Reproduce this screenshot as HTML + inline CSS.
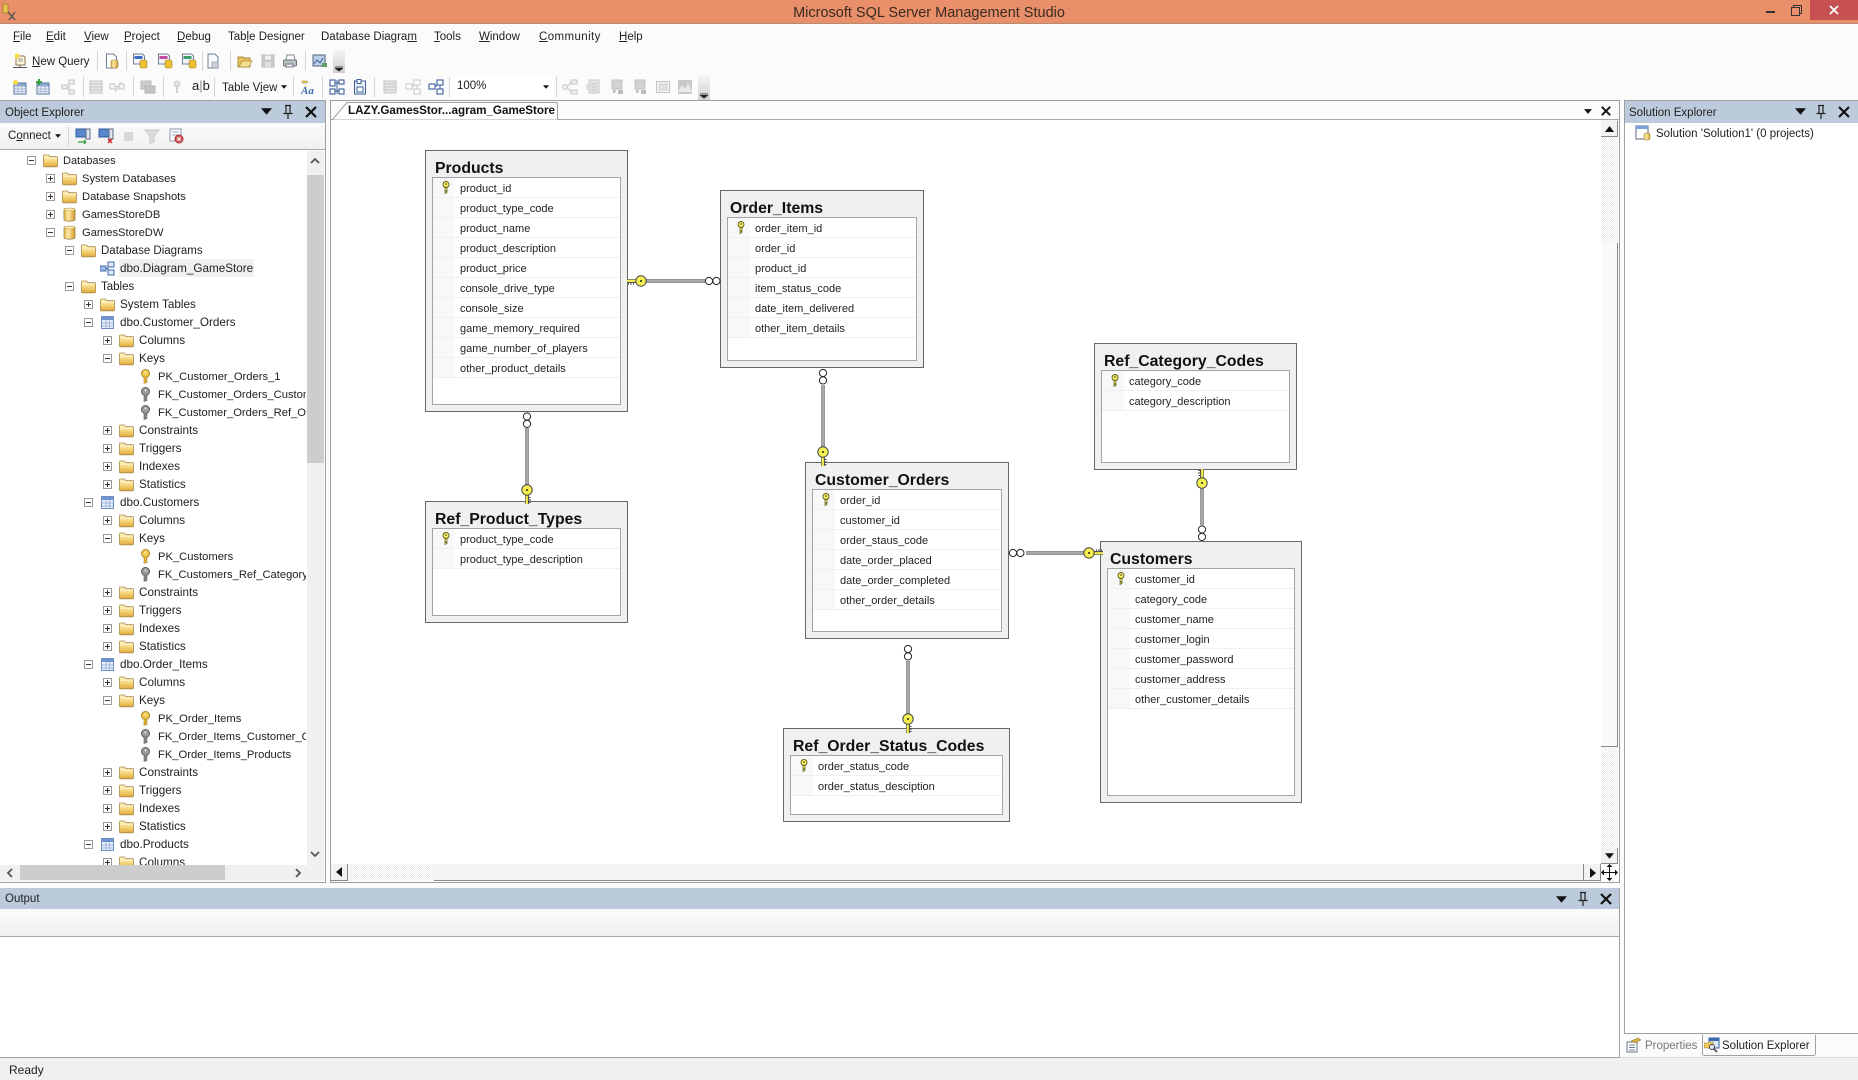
<!DOCTYPE html>
<html lang="en">
<head>
<meta charset="utf-8">
<title>Microsoft SQL Server Management Studio</title>
<style>
html,body{margin:0;padding:0;width:1858px;height:1080px;overflow:hidden;background:#fbfbfb;font-family:"Liberation Sans",sans-serif;font-size:11.5px;color:#222}
.a{position:absolute}
u{text-decoration:underline}
#title{left:0;top:0;width:1858px;height:23px;background:#e9906a;border-bottom:1px solid #b98a72;text-align:center;line-height:26px;font-size:14.5px;color:#3a2a22}
.mi{position:absolute;top:29px;line-height:16px;font-size:11.5px;color:#222;white-space:nowrap}
.sep{position:absolute;width:1px;height:20px;background:#d4d4d4}
.ti{position:absolute;width:16px;height:16px}
.grip{position:absolute;width:12px;background:linear-gradient(#f5f5f5,#cfcfcf)}
.hdr{position:absolute;background:#bccbdb;height:22px;line-height:24px;font-size:11.5px;color:#222;padding-left:5px;box-sizing:border-box}
#tree{position:absolute;left:0;top:151px;width:306px;height:714px;overflow:hidden;background:#fff}
.r{height:18px;line-height:20px;display:flex;align-items:center;white-space:nowrap;font-size:11.5px;color:#222}
.r span{position:relative;top:1px}
.r i{display:block;flex:none;width:9px;height:9px;margin-right:7px;box-sizing:border-box;position:relative}
.r i.p,.r i.m{border:1px solid #9a9a9a;background:#fff}
.r i.p:before,.r i.m:before{content:"";position:absolute;left:1px;top:3px;width:5px;height:1px;background:#333}
.r i.p:after{content:"";position:absolute;left:3px;top:1px;width:1px;height:5px;background:#333}
.r svg{flex:none;width:15px;height:15px;margin-right:5px}
.L0{padding-left:27px;font-size:11px}.L1{padding-left:46px;font-size:11.2px}.L2{padding-left:65px}.L3{padding-left:84px;font-size:11.7px}.L4{padding-left:103px;font-size:11.7px}.L5{padding-left:122px;font-size:11.2px}
.sel{background:linear-gradient(#f0f0f0,#f0f0f0) no-repeat 119px 0/135px 18px}
.t{position:absolute;box-sizing:border-box;background:#f0f0f0;border:1px solid #666}
.t b{position:absolute;left:9px;top:7px;font-size:15.8px;line-height:21px;color:#111;white-space:nowrap}
.t>div{position:absolute;left:6px;right:6px;top:26px;bottom:6px;background:#fff;border:1px solid #a4a4a4;overflow:hidden}
.t p{margin:0;height:20px;box-sizing:border-box;border-bottom:1px solid #f0f0f0;line-height:22px;font-size:11px;color:#222;padding-left:27px;background:linear-gradient(#f8f8f8,#f8f8f8) no-repeat 0 0/22px 100%;position:relative;white-space:nowrap}
.t p svg{position:absolute;left:8px;top:3px;width:10px;height:13px}
.hatch{background:repeating-conic-gradient(#ffffff 0 25%,#ececec 0 50%) 0 0/2px 2px}
.btn{position:absolute;background:#f2f2f2;border-right:1px solid #8a8a8a;border-bottom:1px solid #8a8a8a;box-sizing:border-box}
</style>
</head>
<body>
<svg width="0" height="0" style="position:absolute">
<defs>
<linearGradient id="gf" x1="0" y1="0" x2="0" y2="1"><stop offset="0" stop-color="#fff3c0"/><stop offset=".5" stop-color="#f6d77c"/><stop offset="1" stop-color="#e0a93a"/></linearGradient>
<linearGradient id="gd" x1="0" y1="0" x2="1" y2="0"><stop offset="0" stop-color="#e6b94d"/><stop offset=".4" stop-color="#fbe9a6"/><stop offset="1" stop-color="#d29a2c"/></linearGradient>
<symbol id="folder" viewBox="0 0 15 15"><path d="M.5 3.500V13a.8.8 0 0 0 .8.8h12.400a.8.8 0 0 0 .8-.8V4.500a.8.8 0 0 0-.8-.8H7L5.500 2H1.300a.8.8 0 0 0-.8.8z" fill="url(#gf)" stroke="#a98a4a" stroke-width=".8"/><path d="M1 5.200h13" stroke="#fff6d0" stroke-width="1"/></symbol>
<symbol id="db" viewBox="0 0 15 15"><path d="M2 2.500C2 .8 13 .8 13 2.500v10.300c0 1.800-11 1.800-11 0z" fill="url(#gd)" stroke="#8f7330" stroke-width=".7"/><ellipse cx="7.500" cy="2.500" rx="5.300" ry="1.400" fill="#fff0b5" stroke="#a88a3e" stroke-width=".4"/></symbol>
<symbol id="tbl" viewBox="0 0 15 15"><rect x="1.500" y="1.500" width="12" height="12" fill="#eaf0fa" stroke="#6f8fc4"/><rect x="2" y="2" width="11" height="3" fill="#6f93d0"/><path d="M2 8h11M2 11h11M6 5v8M9.500 5v8" stroke="#9fb5dc"/></symbol>
<symbol id="diag" viewBox="0 0 15 15" preserveAspectRatio="none"><rect x="8" y="1" width="6" height="5" fill="#dfe9f7" stroke="#3f6cae"/><rect x="8" y="9" width="6" height="5" fill="#dfe9f7" stroke="#3f6cae"/><rect x="0" y="5" width="6" height="5" fill="#9fb9de" stroke="#3f6cae"/><path d="M6 7.500h2M8 3.500v8" stroke="#3f6cae" fill="none"/></symbol>
<symbol id="kg" viewBox="0 0 15 15"><circle cx="7.500" cy="4.500" r="4" fill="#f2c94c" stroke="#a9832a"/><circle cx="7.500" cy="3.500" r="1" fill="#fff6c8"/><path d="M6 8v6.500l1.500-.5 1.500-.5v-1.500h-1V11h1V8z" fill="#e6b93a" stroke="#a9832a" stroke-width=".6"/></symbol>
<symbol id="ks" viewBox="0 0 15 15"><circle cx="7.500" cy="4.500" r="4" fill="#9a9a9a" stroke="#5c5c5c"/><circle cx="7.500" cy="3.500" r="1" fill="#e8e8e8"/><path d="M6 8v6.500l1.500-.5 1.500-.5v-1.500h-1V11h1V8z" fill="#8a8a8a" stroke="#5c5c5c" stroke-width=".6"/></symbol>
<symbol id="tk" viewBox="0 0 10 13"><circle cx="5" cy="3.500" r="3" fill="#f8ee60" stroke="#5a5a20" stroke-width=".9"/><circle cx="5" cy="3" r=".8" fill="#333"/><path d="M4 6.500v6l2-1v-1H5v-1h1v-3z" fill="#f8ee60" stroke="#5a5a20" stroke-width=".7"/></symbol>
<symbol id="pin" viewBox="0 0 12 16"><path d="M3 1.500h6M4 1.500v8M8 1.500v8M1.500 9.500h9M6 9.500V15" stroke="#222" stroke-width="1.200" fill="none"/></symbol>
<symbol id="xx" viewBox="0 0 12 12"><path d="M1 1l10 10M11 1L1 11" stroke="#111" stroke-width="2.200"/></symbol>
<symbol id="dn" viewBox="0 0 10 6"><path d="M0 0h10L5 6z" fill="#111"/></symbol>
<symbol id="ddoc" viewBox="0 0 16 16"><path d="M2.500 1h7l3 3v11h-10z" fill="#fff" stroke="#6f7f95"/><rect x="7" y="7" width="7" height="8" rx="2" fill="url(#gd)" stroke="#9a7a28" stroke-width=".6"/></symbol>
<symbol id="dq" viewBox="0 0 16 16"><path d="M1.500 1h9l2 2v8h-11z" fill="#f4f4fa" stroke="#6f7f95"/><rect x="2.500" y="3" width="8" height="3" fill="#3c6cc0"/><rect x="8" y="7" width="7" height="8" rx="2" fill="#f0c030" stroke="#9a7a28" stroke-width=".6"/></symbol>
<symbol id="dq2" viewBox="0 0 16 16"><path d="M1.500 1h9l2 2v8h-11z" fill="#f4f4fa" stroke="#6f7f95"/><rect x="2.500" y="3" width="8" height="3" fill="#c04c9c"/><rect x="8" y="7" width="7" height="8" rx="2" fill="#f0c030" stroke="#9a7a28" stroke-width=".6"/></symbol>
<symbol id="dq3" viewBox="0 0 16 16"><path d="M1.500 1h9l2 2v8h-11z" fill="#f4f4fa" stroke="#6f7f95"/><rect x="2.500" y="3" width="8" height="3" fill="#3c9c6c"/><rect x="8" y="7" width="7" height="8" rx="2" fill="#f0c030" stroke="#9a7a28" stroke-width=".6"/></symbol>
<symbol id="dtx" viewBox="0 0 16 16"><path d="M3 1h7l3 3v11H3z" fill="#f9fafd" stroke="#6f7f95"/><rect x="7" y="9" width="6" height="6" fill="#cdd3dc" stroke="#8a8a9a" stroke-width=".6"/></symbol>
<symbol id="open" viewBox="0 0 16 16"><path d="M1 4h5l1 1h6v9H1z" fill="#eac25c" stroke="#a98a40"/><path d="M2 14l3-6h10l-3 6z" fill="#f7dd8e" stroke="#a98a40" stroke-width=".7"/></symbol>
<symbol id="save" viewBox="0 0 16 16"><rect x="2" y="2" width="12" height="12" fill="#c9c9c9" stroke="#bdbdbd"/><rect x="5" y="2.500" width="6" height="4" fill="#f0f0f0"/><rect x="5" y="9" width="6" height="5" fill="#e0e0e0"/></symbol>
<symbol id="print" viewBox="0 0 16 16"><path d="M5 2h7l1 5H4z" fill="#fff" stroke="#7c8a8a"/><rect x="1.500" y="7" width="13" height="6" rx="1" fill="#b8c2c2" stroke="#667676"/><rect x="4" y="11" width="7" height="3" fill="#eee" stroke="#778"/></symbol>
<symbol id="act" viewBox="0 0 16 16"><rect x="1" y="2" width="12" height="11" fill="#bcd0ea" stroke="#50607a"/><path d="M2 11l3-4 3 3 3-5" stroke="#3a5f8a" fill="none"/><rect x="10" y="10" width="5" height="4" fill="#5f9e5f"/></symbol>
<symbol id="new" viewBox="0 0 16 16"><path d="M4 3h8l1 1v8H4z" fill="#fff8dc" stroke="#8a7a50"/><circle cx="5" cy="3" r="2.500" fill="#f7e04a"/><path d="M1 14.500h14M8 12v2.500" stroke="#555"/><path d="M6 6h5M6 8h5" stroke="#999"/></symbol>
<symbol id="tnew" viewBox="0 0 16 16"><rect x="2" y="4" width="12" height="11" fill="#eef3fb" stroke="#56759f"/><rect x="2.500" y="4.500" width="11" height="3" fill="#8ea9d0"/><path d="M2 10h12M2 12.500h12M6 7v8M10 7v8" stroke="#a6b9d6"/><circle cx="3.500" cy="3.500" r="2.500" fill="#f7d94a"/></symbol>
<symbol id="tadd" viewBox="0 0 16 16"><rect x="2" y="4" width="12" height="11" fill="#eef3fb" stroke="#56759f"/><rect x="2.500" y="4.500" width="11" height="3" fill="#8ea9d0"/><path d="M2 10h12M2 12.500h12M6 7v8M10 7v8" stroke="#a6b9d6"/><path d="M4 0v6M1 3h6" stroke="#3fa03f" stroke-width="2"/></symbol>
<symbol id="gb1" viewBox="0 0 16 16"><g fill="#f0f0f0" stroke="#c2c2c2"><rect x="9" y="1" width="5" height="4"/><rect x="2" y="6" width="5" height="4"/><rect x="9" y="11" width="5" height="4"/></g><path d="M7 8h2M9 3v10" stroke="#c2c2c2" fill="none"/></symbol>
<symbol id="gb2" viewBox="0 0 16 16"><rect x="2" y="2" width="12" height="12" fill="#e6e6e6" stroke="#c6c6c6"/><path d="M2 5h12M2 8h12M2 11h12" stroke="#c6c6c6"/></symbol>
<symbol id="gb3" viewBox="0 0 16 16"><g fill="#f4f4f4" stroke="#c6c6c6"><rect x="1" y="5" width="5" height="5"/><rect x="10" y="5" width="5" height="5"/></g><path d="M6 7.500h4M12 3l-6 10" stroke="#c6c6c6"/></symbol>
<symbol id="gb4" viewBox="0 0 16 16"><rect x="1" y="2" width="10" height="8" fill="#ccc" stroke="#bbb"/><rect x="5" y="7" width="10" height="7" fill="#c4c4c4" stroke="#b4b4b4"/></symbol>
<symbol id="klt" viewBox="0 0 16 16"><circle cx="8" cy="5" r="3" fill="#e2e2e2" stroke="#cfcfcf"/><path d="M8 8v6" stroke="#cfcfcf" stroke-width="2"/></symbol>
<symbol id="aa" viewBox="0 0 16 16"><path d="M2 2h5l1 2h-6z" fill="#e9c45e" stroke="#a98a40" stroke-width=".5"/><path d="M3 6l5 2-2 0z" fill="#e9c45e"/><text x="1" y="15" font-family="Liberation Serif,serif" font-style="italic" font-weight="bold" font-size="11" fill="#3a69b0">Aa</text></symbol>
<symbol id="lay" viewBox="0 0 16 16"><g fill="#fff" stroke="#3a5f9a" stroke-width="1.100"><rect x="1" y="1" width="5" height="6"/><rect x="10" y="1" width="5" height="4"/><rect x="1" y="10" width="5" height="5"/><rect x="10" y="10" width="5" height="5"/></g><path d="M6 4h4M8 1v14M6 12h4" stroke="#3a5f9a" fill="none"/></symbol>
<symbol id="tsave" viewBox="0 0 16 16"><rect x="2.500" y="2" width="11" height="13" fill="#eef3fb" stroke="#3a5f9a"/><rect x="5" y="0.500" width="4" height="4" fill="#fff" stroke="#3a5f9a"/><rect x="5" y="8" width="6" height="5" fill="#fff" stroke="#3a5f9a"/></symbol>
<symbol id="lay2" viewBox="0 0 16 16"><g fill="#fff" stroke="#c6c6c6"><rect x="9" y="1" width="6" height="5"/><rect x="1" y="5" width="6" height="5"/><rect x="9" y="10" width="6" height="5"/></g><path d="M7 7h2M12 6v4" stroke="#c6c6c6"/></symbol>
<symbol id="lay3" viewBox="0 0 16 16"><g fill="#fff" stroke="#3a5f9a" stroke-width="1.100"><rect x="9" y="1" width="6" height="5"/><rect x="1" y="5" width="6" height="5"/><rect x="9" y="10" width="6" height="5"/></g><path d="M7 7h2M12 6v4" stroke="#3a5f9a"/></symbol>
<symbol id="gsh" viewBox="0 0 16 16"><g fill="#eee" stroke="#c6c6c6"><circle cx="3" cy="8" r="2.500"/><rect x="9" y="1" width="6" height="4"/><rect x="9" y="11" width="6" height="4"/></g><path d="M5 8l4-5M5 8l4 5" stroke="#c6c6c6"/></symbol>
<symbol id="gdoc" viewBox="0 0 16 16"><rect x="4" y="1" width="10" height="13" fill="#e4e4e4" stroke="#cacaca"/><path d="M1 6l3-2v8l-3-2z" fill="#ddd"/><path d="M6 5h6M6 8h6M6 11h6" stroke="#c4c4c4"/></symbol>
<symbol id="gab" viewBox="0 0 16 16"><rect x="3" y="1" width="10" height="9" fill="#d2d2d2" stroke="#c0c0c0"/><path d="M4 11h3l-1 3h-2zM9 11h5v4H9z" fill="#bcbcbc"/></symbol>
<symbol id="gsq" viewBox="0 0 16 16"><rect x="1.500" y="2.500" width="13" height="11" fill="#f4f4f4" stroke="#c4c4c4"/><rect x="4" y="5" width="8" height="6" fill="#e2e2e2" stroke="#cfcfcf"/></symbol>
<symbol id="gim" viewBox="0 0 16 16"><rect x="1" y="1" width="14" height="14" fill="#c9c9c9"/><path d="M1 13l4-7 3 4 3-6 4 9z" fill="#e9e9e9"/></symbol>
<symbol id="conn1" viewBox="0 0 16 16"><rect x="1" y="1" width="10" height="8" fill="#5a88cc" stroke="#2f5a9a"/><rect x="11" y="1" width="4" height="10" fill="#dfe6f0" stroke="#5a6a80"/><path d="M3 14h8M11 14l-2-2M11 14l-2 2" stroke="#2e9a3a" stroke-width="1.200" fill="none"/></symbol>
<symbol id="conn2" viewBox="0 0 16 16"><rect x="1" y="1" width="10" height="8" fill="#5a88cc" stroke="#2f5a9a"/><rect x="11" y="1" width="4" height="10" fill="#dfe6f0" stroke="#5a6a80"/><path d="M10 11l4 4M14 11l-4 4" stroke="#d22" stroke-width="1.400"/></symbol>
<symbol id="scr" viewBox="0 0 16 16"><rect x="2" y="1" width="11" height="12" fill="#fff" stroke="#8a9ab0"/><path d="M4 4h7M4 7h7" stroke="#9ab"/><circle cx="11" cy="11" r="4" fill="#d86060" stroke="#a03030"/><path d="M9.500 9.500l3 3M12.500 9.500l-3 3" stroke="#fff"/></symbol>
<symbol id="fil" viewBox="0 0 16 16"><path d="M1 2h14L10 8v6l-4 1V8z" fill="#dcdcdc" stroke="#c8c8c8"/></symbol>
<symbol id="sol" viewBox="0 0 16 16"><rect x="1" y="1" width="12" height="13" fill="#fff" stroke="#5a6a80"/><rect x="1" y="1" width="12" height="3" fill="#7ba2d8"/><rect x="9" y="8" width="6" height="7" rx="2" fill="url(#gd)" stroke="#9a7a28" stroke-width=".5"/></symbol>
<symbol id="prop" viewBox="0 0 16 16"><rect x="1" y="5" width="10" height="10" fill="#fff" stroke="#6a7a90"/><path d="M3 8h6M3 10.500h6M3 13h6" stroke="#6a7a90"/><path d="M5 4l7-3 3 2-6 3z" fill="#d8b04a" stroke="#8a7030" stroke-width=".5"/></symbol>
<symbol id="solx" viewBox="0 0 16 16"><rect x="5" y="1" width="10" height="10" fill="#dde8f8" stroke="#3a5f9a"/><rect x="5" y="1" width="10" height="3" fill="#3a6ab0"/><path d="M0 6h4l1-1h4v6H0z" fill="#ecc860" stroke="#97803a" stroke-width=".6"/><circle cx="8" cy="10" r="2.500" fill="#eef" stroke="#444"/><path d="M10 12l3 3" stroke="#333" stroke-width="1.500"/></symbol>
<g id="dk"><path d="M-14 0h9" stroke="#444" stroke-width="3.800"/><path d="M-14 -.2h9" stroke="#f4f050" stroke-width="2.200"/><path d="M-12.500 2v1.500M-10 2v2M-7.500 2v1.500" stroke="#444"/><circle r="5.200" fill="#f4f050" stroke="#444" stroke-width="1"/><circle r="1" fill="#222"/></g>
<g id="dh"><circle cx="0" r="3.600" fill="#fff" stroke="#222"/><circle cx="7.400" r="3.600" fill="#fff" stroke="#222"/></g>
</defs>
</svg>

<div id="title" class="a">Microsoft SQL Server Management Studio</div>
<svg class="a" style="left:2px;top:3px" width="18" height="18" viewBox="0 0 18 18"><rect x="1" y="1" width="5" height="9" fill="#e8c04a" stroke="#8a7030" stroke-width=".6"/><path d="M6 9l7 8M13 9l-6 8" stroke="#555" stroke-width="1.400"/></svg>
<svg class="a" style="left:1765px;top:10px" width="14" height="4"><rect x="1" y="1" width="9" height="2" fill="#333"/></svg>
<svg class="a" style="left:1790px;top:4px" width="14" height="14"><rect x="1.500" y="3.500" width="8" height="8" fill="none" stroke="#333"/><path d="M3.500 3.500v-2h8v8h-2" fill="none" stroke="#333"/></svg>
<div class="a" style="left:1810px;top:0;width:48px;height:20px;background:#c75050"></div>
<svg class="a" style="left:1828px;top:4px" width="12" height="12"><path d="M2 2l8 8M10 2l-8 8" stroke="#fff" stroke-width="1.800"/></svg>

<span class="mi" style="left:13px"><u>F</u>ile</span>
<span class="mi" style="left:46px"><u>E</u>dit</span>
<span class="mi" style="left:84px"><u>V</u>iew</span>
<span class="mi" style="left:124px"><u>P</u>roject</span>
<span class="mi" style="left:177px"><u>D</u>ebug</span>
<span class="mi" style="left:228px">Tab<u>l</u>e Designer</span>
<span class="mi" style="left:321px">Database Diagra<u>m</u></span>
<span class="mi" style="left:434px"><u>T</u>ools</span>
<span class="mi" style="left:479px"><u>W</u>indow</span>
<span class="mi" style="left:539px;letter-spacing:.4px"><u>C</u>ommunity</span>
<span class="mi" style="left:619px"><u>H</u>elp</span>

<!-- toolbar 1 -->
<svg class="ti" style="left:12px;top:53px"><use href="#new"/></svg>
<span class="mi" style="left:32px;top:54px"><u>N</u>ew Query</span>
<div class="sep" style="left:97px;top:51px"></div>
<svg class="ti" style="left:104px;top:53px"><use href="#ddoc"/></svg>
<div class="sep" style="left:126px;top:51px"></div>
<svg class="ti" style="left:132px;top:53px"><use href="#dq"/></svg>
<svg class="ti" style="left:157px;top:53px"><use href="#dq2"/></svg>
<svg class="ti" style="left:181px;top:53px"><use href="#dq3"/></svg>
<div class="sep" style="left:202px;top:51px"></div>
<svg class="ti" style="left:205px;top:53px"><use href="#dtx"/></svg>
<div class="sep" style="left:230px;top:51px"></div>
<svg class="ti" style="left:237px;top:53px"><use href="#open"/></svg>
<svg class="ti" style="left:260px;top:53px"><use href="#save"/></svg>
<svg class="ti" style="left:282px;top:53px"><use href="#print"/></svg>
<div class="sep" style="left:305px;top:51px"></div>
<svg class="ti" style="left:312px;top:53px"><use href="#act"/></svg>
<div class="grip" style="left:333px;top:50px;height:23px"></div>
<svg class="a" style="left:335px;top:66px" width="8" height="6"><path d="M0 0h8M0 2h8l-4 3z" stroke="#222" stroke-width=".8" fill="#222"/></svg>

<!-- toolbar 2 -->
<svg class="ti" style="left:12px;top:79px"><use href="#tnew"/></svg>
<svg class="ti" style="left:35px;top:79px"><use href="#tadd"/></svg>
<svg class="ti" style="left:60px;top:79px"><use href="#gb1"/></svg>
<div class="sep" style="left:83px;top:77px"></div>
<svg class="ti" style="left:88px;top:79px"><use href="#gb2"/></svg>
<svg class="ti" style="left:109px;top:79px"><use href="#gb3"/></svg>
<div class="sep" style="left:133px;top:77px"></div>
<svg class="ti" style="left:140px;top:79px"><use href="#gb4"/></svg>
<div class="sep" style="left:163px;top:77px"></div>
<svg class="ti" style="left:169px;top:79px"><use href="#klt"/></svg>
<span class="mi" style="left:192px;top:78px;font-size:13px">a<span style="color:#888">|</span>b</span>
<div class="sep" style="left:214px;top:77px"></div>
<span class="mi" style="left:222px;top:80px">Table V<u>i</u>ew</span>
<svg class="a" style="left:281px;top:85px" width="6" height="4"><use href="#dn"/></svg>
<div class="sep" style="left:293px;top:77px"></div>
<svg class="ti" style="left:300px;top:79px"><use href="#aa"/></svg>
<div class="sep" style="left:322px;top:77px"></div>
<svg class="ti" style="left:329px;top:79px"><use href="#lay"/></svg>
<svg class="ti" style="left:352px;top:79px"><use href="#tsave"/></svg>
<div class="sep" style="left:374px;top:77px"></div>
<svg class="ti" style="left:382px;top:79px"><use href="#gb2"/></svg>
<svg class="ti" style="left:405px;top:79px"><use href="#lay2"/></svg>
<svg class="ti" style="left:428px;top:79px"><use href="#lay3"/></svg>
<div class="sep" style="left:449px;top:77px"></div>
<div class="a" style="left:450px;top:76px;width:104px;height:22px;background:#fff"></div>
<span class="mi" style="left:457px;top:78px">100%</span>
<svg class="a" style="left:543px;top:85px" width="6" height="4"><use href="#dn"/></svg>
<div class="sep" style="left:556px;top:77px"></div>
<svg class="ti" style="left:562px;top:79px"><use href="#gsh"/></svg>
<svg class="ti" style="left:585px;top:79px"><use href="#gdoc"/></svg>
<svg class="ti" style="left:609px;top:79px"><use href="#gab"/></svg>
<svg class="ti" style="left:632px;top:79px"><use href="#gab"/></svg>
<svg class="ti" style="left:655px;top:79px"><use href="#gsq"/></svg>
<svg class="ti" style="left:677px;top:79px"><use href="#gim"/></svg>
<div class="grip" style="left:698px;top:76px;height:24px"></div>
<svg class="a" style="left:700px;top:93px" width="8" height="6"><path d="M0 0h8M0 2h8l-4 3z" stroke="#222" stroke-width=".8" fill="#222"/></svg>

<!-- object explorer -->
<div class="a" style="left:0;top:100px;width:326px;height:783px;box-sizing:border-box;border:1px solid #9f9f9f;border-left:0;background:#fff"></div>
<div class="hdr" style="left:0;top:101px;width:325px">Object Explorer</div>
<svg class="a" style="left:261px;top:108px" width="11" height="7"><use href="#dn"/></svg>
<svg class="a" style="left:282px;top:104px" width="12" height="16"><use href="#pin"/></svg>
<svg class="a" style="left:305px;top:106px" width="12" height="12"><use href="#xx"/></svg>
<div class="a" style="left:0;top:123px;width:325px;height:26px;background:linear-gradient(#fbfbfb,#f0f0f0);border-bottom:1px solid #a8a8a8"></div>
<span class="mi" style="left:8px;top:128px">C<u>o</u>nnect</span>
<svg class="a" style="left:55px;top:134px" width="6" height="4"><use href="#dn"/></svg>
<div class="sep" style="left:68px;top:127px"></div>
<svg class="ti" style="left:75px;top:128px"><use href="#conn1"/></svg>
<svg class="ti" style="left:98px;top:128px"><use href="#conn2"/></svg>
<div class="a" style="left:124px;top:132px;width:9px;height:9px;background:#d8d8d8"></div>
<svg class="ti" style="left:144px;top:128px"><use href="#fil"/></svg>
<svg class="ti" style="left:168px;top:128px"><use href="#scr"/></svg>

<div id="tree">
<div class="r L0"><i class="m"></i><svg><use href="#folder"/></svg><span>Databases</span></div>
<div class="r L1"><i class="p"></i><svg><use href="#folder"/></svg><span>System Databases</span></div>
<div class="r L1"><i class="p"></i><svg><use href="#folder"/></svg><span>Database Snapshots</span></div>
<div class="r L1"><i class="p"></i><svg><use href="#db"/></svg><span>GamesStoreDB</span></div>
<div class="r L1"><i class="m"></i><svg><use href="#db"/></svg><span>GamesStoreDW</span></div>
<div class="r L2"><i class="m"></i><svg><use href="#folder"/></svg><span>Database Diagrams</span></div>
<div class="r L3 sel"><i></i><svg><use href="#diag"/></svg><span>dbo.Diagram_GameStore</span></div>
<div class="r L2"><i class="m"></i><svg><use href="#folder"/></svg><span>Tables</span></div>
<div class="r L3"><i class="p"></i><svg><use href="#folder"/></svg><span>System Tables</span></div>
<div class="r L3"><i class="m"></i><svg><use href="#tbl"/></svg><span>dbo.Customer_Orders</span></div>
<div class="r L4"><i class="p"></i><svg><use href="#folder"/></svg><span>Columns</span></div>
<div class="r L4"><i class="m"></i><svg><use href="#folder"/></svg><span>Keys</span></div>
<div class="r L5"><i></i><svg><use href="#kg"/></svg><span>PK_Customer_Orders_1</span></div>
<div class="r L5"><i></i><svg><use href="#ks"/></svg><span>FK_Customer_Orders_Customers</span></div>
<div class="r L5"><i></i><svg><use href="#ks"/></svg><span>FK_Customer_Orders_Ref_Order_Status_Codes</span></div>
<div class="r L4"><i class="p"></i><svg><use href="#folder"/></svg><span>Constraints</span></div>
<div class="r L4"><i class="p"></i><svg><use href="#folder"/></svg><span>Triggers</span></div>
<div class="r L4"><i class="p"></i><svg><use href="#folder"/></svg><span>Indexes</span></div>
<div class="r L4"><i class="p"></i><svg><use href="#folder"/></svg><span>Statistics</span></div>
<div class="r L3"><i class="m"></i><svg><use href="#tbl"/></svg><span>dbo.Customers</span></div>
<div class="r L4"><i class="p"></i><svg><use href="#folder"/></svg><span>Columns</span></div>
<div class="r L4"><i class="m"></i><svg><use href="#folder"/></svg><span>Keys</span></div>
<div class="r L5"><i></i><svg><use href="#kg"/></svg><span>PK_Customers</span></div>
<div class="r L5"><i></i><svg><use href="#ks"/></svg><span>FK_Customers_Ref_Category_Codes</span></div>
<div class="r L4"><i class="p"></i><svg><use href="#folder"/></svg><span>Constraints</span></div>
<div class="r L4"><i class="p"></i><svg><use href="#folder"/></svg><span>Triggers</span></div>
<div class="r L4"><i class="p"></i><svg><use href="#folder"/></svg><span>Indexes</span></div>
<div class="r L4"><i class="p"></i><svg><use href="#folder"/></svg><span>Statistics</span></div>
<div class="r L3"><i class="m"></i><svg><use href="#tbl"/></svg><span>dbo.Order_Items</span></div>
<div class="r L4"><i class="p"></i><svg><use href="#folder"/></svg><span>Columns</span></div>
<div class="r L4"><i class="m"></i><svg><use href="#folder"/></svg><span>Keys</span></div>
<div class="r L5"><i></i><svg><use href="#kg"/></svg><span>PK_Order_Items</span></div>
<div class="r L5"><i></i><svg><use href="#ks"/></svg><span>FK_Order_Items_Customer_Orders</span></div>
<div class="r L5"><i></i><svg><use href="#ks"/></svg><span>FK_Order_Items_Products</span></div>
<div class="r L4"><i class="p"></i><svg><use href="#folder"/></svg><span>Constraints</span></div>
<div class="r L4"><i class="p"></i><svg><use href="#folder"/></svg><span>Triggers</span></div>
<div class="r L4"><i class="p"></i><svg><use href="#folder"/></svg><span>Indexes</span></div>
<div class="r L4"><i class="p"></i><svg><use href="#folder"/></svg><span>Statistics</span></div>
<div class="r L3"><i class="m"></i><svg><use href="#tbl"/></svg><span>dbo.Products</span></div>
<div class="r L4"><i class="p"></i><svg><use href="#folder"/></svg><span>Columns</span></div>
</div>
<!-- OE scrollbars -->
<div class="a" style="left:307px;top:151px;width:17px;height:730px;background:#f0f0f0"></div>
<div class="a" style="left:307px;top:175px;width:17px;height:288px;background:#cdcdcd"></div>
<svg class="a" style="left:310px;top:157px" width="10" height="7"><path d="M1 6l4-4 4 4" fill="none" stroke="#555" stroke-width="1.800"/></svg>
<svg class="a" style="left:310px;top:851px" width="10" height="7"><path d="M1 1l4 4 4-4" fill="none" stroke="#555" stroke-width="1.800"/></svg>
<div class="a" style="left:0;top:865px;width:307px;height:16px;background:#f0f0f0"></div>
<div class="a" style="left:20px;top:865px;width:205px;height:15px;background:#cdcdcd"></div>
<svg class="a" style="left:6px;top:868px" width="8" height="10"><path d="M6 1L2 5l4 4" fill="none" stroke="#555" stroke-width="1.800"/></svg>
<svg class="a" style="left:294px;top:868px" width="8" height="10"><path d="M2 1l4 4-4 4" fill="none" stroke="#555" stroke-width="1.800"/></svg>

<!-- document -->
<div class="a" style="left:330px;top:100px;width:1290px;height:783px;box-sizing:border-box;border:1px solid #9f9f9f;border-bottom:1px solid #9f9f9f;background:#fff"></div>
<div class="a" style="left:331px;top:119px;width:1288px;height:1px;background:#a8a8a8"></div>
<div class="a" style="left:331px;top:101px;width:1288px;height:18px;background:#fbfbfb"></div>
<svg class="a" style="left:332px;top:102px" width="226" height="18"><path d="M.5 17.500L15 .5h209a1.500 1.500 0 0 1 1.500 1.500v15.500" fill="#fff" stroke="#a0a0a0"/></svg>
<span class="a" style="left:348px;top:103px;line-height:16px;font-weight:bold;font-size:11.65px;color:#111;white-space:nowrap">LAZY.GamesStor...agram_GameStore</span>
<svg class="a" style="left:1584px;top:109px" width="8" height="5"><use href="#dn"/></svg>
<svg class="a" style="left:1601px;top:106px" width="10" height="10"><use href="#xx"/></svg>

<!-- doc scroll -->
<div class="a hatch" style="left:1601px;top:120px;width:17px;height:744px"></div>
<div class="btn" style="left:1601px;top:121px;width:17px;height:16px"></div>
<svg class="a" style="left:1605px;top:126px" width="9" height="6"><path d="M0 6h9L4.500 0z" fill="#111"/></svg>
<div class="btn" style="left:1601px;top:243px;width:17px;height:504px;background:#fafafa"></div>
<div class="btn" style="left:1601px;top:848px;width:17px;height:16px"></div>
<svg class="a" style="left:1605px;top:853px" width="9" height="6"><use href="#dn"/></svg>
<div class="a hatch" style="left:331px;top:864px;width:1270px;height:17px"></div>
<div class="btn" style="left:331px;top:864px;width:17px;height:17px"></div>
<svg class="a" style="left:336px;top:867px" width="6" height="10"><path d="M6 0v10L0 5z" fill="#111"/></svg>
<div class="btn" style="left:434px;top:864px;width:1150px;height:17px;background:#f4f4f4"></div>
<div class="btn" style="left:1584px;top:864px;width:17px;height:17px"></div>
<svg class="a" style="left:1590px;top:868px" width="6" height="10"><path d="M0 0v10l6-5z" fill="#111"/></svg>
<svg class="a" style="left:1601px;top:864px" width="17" height="17" viewBox="0 0 17 17"><path d="M8.500 1v15M1 8.500h15" stroke="#111" stroke-width="1"/><path d="M8.500 0l3 3h-6zM8.500 17l3-3h-6zM0 8.500l3-3v6zM17 8.500l-3-3v6z" fill="#111"/></svg>

<!-- diagram tables -->
<div class="t" style="left:425px;top:150px;width:203px;height:262px"><b>Products</b><div>
<p><svg><use href="#tk"/></svg>product_id</p><p>product_type_code</p><p>product_name</p><p>product_description</p><p>product_price</p><p>console_drive_type</p><p>console_size</p><p>game_memory_required</p><p>game_number_of_players</p><p>other_product_details</p>
</div></div>
<div class="t" style="left:425px;top:501px;width:203px;height:122px"><b>Ref_Product_Types</b><div>
<p><svg><use href="#tk"/></svg>product_type_code</p><p>product_type_description</p>
</div></div>
<div class="t" style="left:720px;top:190px;width:204px;height:178px"><b>Order_Items</b><div>
<p><svg><use href="#tk"/></svg>order_item_id</p><p>order_id</p><p>product_id</p><p>item_status_code</p><p>date_item_delivered</p><p>other_item_details</p>
</div></div>
<div class="t" style="left:805px;top:462px;width:204px;height:177px"><b>Customer_Orders</b><div>
<p><svg><use href="#tk"/></svg>order_id</p><p>customer_id</p><p>order_staus_code</p><p>date_order_placed</p><p>date_order_completed</p><p>other_order_details</p>
</div></div>
<div class="t" style="left:1094px;top:343px;width:203px;height:127px"><b>Ref_Category_Codes</b><div>
<p><svg><use href="#tk"/></svg>category_code</p><p>category_description</p>
</div></div>
<div class="t" style="left:1100px;top:541px;width:202px;height:262px"><b>Customers</b><div>
<p><svg><use href="#tk"/></svg>customer_id</p><p>category_code</p><p>customer_name</p><p>customer_login</p><p>customer_password</p><p>customer_address</p><p>other_customer_details</p>
</div></div>
<div class="t" style="left:783px;top:728px;width:227px;height:94px"><b>Ref_Order_Status_Codes</b><div>
<p><svg><use href="#tk"/></svg>order_status_code</p><p>order_status_desciption</p>
</div></div>

<!-- connectors -->
<svg class="a" style="left:0;top:0;pointer-events:none" width="1858" height="1080">
<g fill="none">
<path d="M645 281h60M527 428v62M823 385v62M1026 553h59M1202 488v37M908 661v53" stroke="#6f6f6f" stroke-width="3.400"/>
<path d="M645 281h60M527 428v62M823 385v62M1026 553h59M1202 488v37M908 661v53" stroke="#e0e0e0" stroke-width="1"/>
</g>
<use href="#dk" transform="translate(641 281)"/>
<use href="#dh" transform="translate(709 281)"/>
<use href="#dk" transform="translate(527 490) rotate(-90)"/>
<use href="#dh" transform="translate(527 416.500) rotate(90)"/>
<use href="#dk" transform="translate(823 452) rotate(-90)"/>
<use href="#dh" transform="translate(823 373) rotate(90)"/>
<use href="#dh" transform="translate(1013 553)"/>
<use href="#dk" transform="translate(1089 553) rotate(180)"/>
<use href="#dk" transform="translate(1202 483) rotate(90)"/>
<use href="#dh" transform="translate(1202 529.500) rotate(90)"/>
<use href="#dh" transform="translate(908 649) rotate(90)"/>
<use href="#dk" transform="translate(908 719) rotate(-90)"/>
</svg>

<!-- output -->
<div class="a" style="left:0;top:888px;width:1620px;height:170px;box-sizing:border-box;border:1px solid #9f9f9f;border-left:0;border-top:0;background:#fff"></div>
<div class="hdr" style="left:0;top:888px;width:1619px;height:21px;line-height:23px">Output</div>
<svg class="a" style="left:1556px;top:896px" width="11" height="7"><use href="#dn"/></svg>
<svg class="a" style="left:1577px;top:891px" width="12" height="16"><use href="#pin"/></svg>
<svg class="a" style="left:1600px;top:893px" width="12" height="12"><use href="#xx"/></svg>
<div class="a" style="left:0;top:909px;width:1619px;height:28px;box-sizing:border-box;background:linear-gradient(#fbfbfb,#f0f0f0);border-bottom:1px solid #a8a8a8"></div>

<!-- solution explorer -->
<div class="a" style="left:1624px;top:100px;width:234px;height:934px;box-sizing:border-box;border:1px solid #9f9f9f;border-right:0;background:#fff"></div>
<div class="hdr" style="left:1625px;top:101px;width:233px;padding-left:4px">Solution Explorer</div>
<svg class="a" style="left:1795px;top:108px" width="11" height="7"><use href="#dn"/></svg>
<svg class="a" style="left:1815px;top:104px" width="12" height="16"><use href="#pin"/></svg>
<svg class="a" style="left:1838px;top:106px" width="12" height="12"><use href="#xx"/></svg>
<svg class="ti" style="left:1635px;top:125px"><use href="#sol"/></svg>
<span class="a" style="left:1656px;top:126px;line-height:16px;white-space:nowrap">Solution 'Solution1' (0 projects)</span>

<svg class="ti" style="left:1626px;top:1037px"><use href="#prop"/></svg>
<span class="a" style="left:1645px;top:1038px;line-height:16px;color:#777;white-space:nowrap">Properties</span>
<svg class="a" style="left:1702px;top:1034px" width="114" height="23"><path d="M.5 .5v19a2 2 0 0 0 2 2h109a2 2 0 0 0 2-2V1" fill="#fbfbfb" stroke="#a0a0a0"/></svg>
<svg class="ti" style="left:1704px;top:1037px"><use href="#solx"/></svg>
<span class="a" style="left:1722px;top:1038px;line-height:16px;white-space:nowrap">Solution Explorer</span>

<!-- status -->
<div class="a" style="left:0;top:1058px;width:1858px;height:22px;background:#f0f0f0"></div>
<div class="a" style="left:1620px;top:1057px;width:238px;height:1px;background:#dcdcdc"></div>
<span class="a" style="left:9px;top:1062px;line-height:16px;font-size:12px;color:#222">Ready</span>
</body>
</html>
